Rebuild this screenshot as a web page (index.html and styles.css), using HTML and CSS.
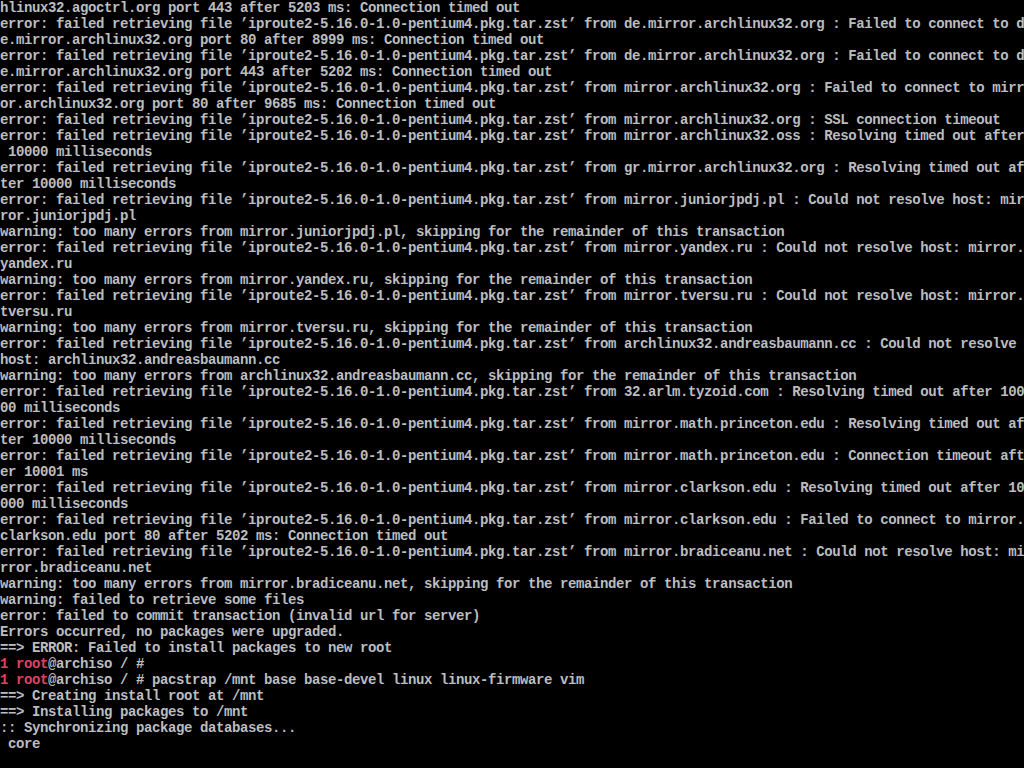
FILE: index.html
```html
<!DOCTYPE html>
<html>
<head>
<meta charset="utf-8">
<title>tty1</title>
<link rel="stylesheet" href="styles.css">
</head>
<body>
<pre class="console">hlinux32.agoctrl.org port 443 after 5203 ms: Connection timed out
error: failed retrieving file ’iproute2-5.16.0-1.0-pentium4.pkg.tar.zst’ from de.mirror.archlinux32.org : Failed to connect to d
e.mirror.archlinux32.org port 80 after 8999 ms: Connection timed out
error: failed retrieving file ’iproute2-5.16.0-1.0-pentium4.pkg.tar.zst’ from de.mirror.archlinux32.org : Failed to connect to d
e.mirror.archlinux32.org port 443 after 5202 ms: Connection timed out
error: failed retrieving file ’iproute2-5.16.0-1.0-pentium4.pkg.tar.zst’ from mirror.archlinux32.org : Failed to connect to mirr
or.archlinux32.org port 80 after 9685 ms: Connection timed out
error: failed retrieving file ’iproute2-5.16.0-1.0-pentium4.pkg.tar.zst’ from mirror.archlinux32.org : SSL connection timeout
error: failed retrieving file ’iproute2-5.16.0-1.0-pentium4.pkg.tar.zst’ from mirror.archlinux32.oss : Resolving timed out after
 10000 milliseconds
error: failed retrieving file ’iproute2-5.16.0-1.0-pentium4.pkg.tar.zst’ from gr.mirror.archlinux32.org : Resolving timed out af
ter 10000 milliseconds
error: failed retrieving file ’iproute2-5.16.0-1.0-pentium4.pkg.tar.zst’ from mirror.juniorjpdj.pl : Could not resolve host: mir
ror.juniorjpdj.pl
warning: too many errors from mirror.juniorjpdj.pl, skipping for the remainder of this transaction
error: failed retrieving file ’iproute2-5.16.0-1.0-pentium4.pkg.tar.zst’ from mirror.yandex.ru : Could not resolve host: mirror.
yandex.ru
warning: too many errors from mirror.yandex.ru, skipping for the remainder of this transaction
error: failed retrieving file ’iproute2-5.16.0-1.0-pentium4.pkg.tar.zst’ from mirror.tversu.ru : Could not resolve host: mirror.
tversu.ru
warning: too many errors from mirror.tversu.ru, skipping for the remainder of this transaction
error: failed retrieving file ’iproute2-5.16.0-1.0-pentium4.pkg.tar.zst’ from archlinux32.andreasbaumann.cc : Could not resolve
host: archlinux32.andreasbaumann.cc
warning: too many errors from archlinux32.andreasbaumann.cc, skipping for the remainder of this transaction
error: failed retrieving file ’iproute2-5.16.0-1.0-pentium4.pkg.tar.zst’ from 32.arlm.tyzoid.com : Resolving timed out after 100
00 milliseconds
error: failed retrieving file ’iproute2-5.16.0-1.0-pentium4.pkg.tar.zst’ from mirror.math.princeton.edu : Resolving timed out af
ter 10000 milliseconds
error: failed retrieving file ’iproute2-5.16.0-1.0-pentium4.pkg.tar.zst’ from mirror.math.princeton.edu : Connection timeout aft
er 10001 ms
error: failed retrieving file ’iproute2-5.16.0-1.0-pentium4.pkg.tar.zst’ from mirror.clarkson.edu : Resolving timed out after 10
000 milliseconds
error: failed retrieving file ’iproute2-5.16.0-1.0-pentium4.pkg.tar.zst’ from mirror.clarkson.edu : Failed to connect to mirror.
clarkson.edu port 80 after 5202 ms: Connection timed out
error: failed retrieving file ’iproute2-5.16.0-1.0-pentium4.pkg.tar.zst’ from mirror.bradiceanu.net : Could not resolve host: mi
rror.bradiceanu.net
warning: too many errors from mirror.bradiceanu.net, skipping for the remainder of this transaction
warning: failed to retrieve some files
error: failed to commit transaction (invalid url for server)
Errors occurred, no packages were upgraded.
==&gt; ERROR: Failed to install packages to new root
<span class="red">1 root</span>@archiso / #
<span class="red">1 root</span>@archiso / # pacstrap /mnt base base-devel linux linux-firmware vim
==&gt; Creating install root at /mnt
==&gt; Installing packages to /mnt
:: Synchronizing package databases...
 core</pre>
</body>
</html>
```

FILE: styles.css
```css
html, body {
  margin: 0;
  padding: 0;
  background: #000;
  width: 1024px;
  height: 768px;
  overflow: hidden;
}
.console {
  margin: 0;
  padding: 0;
  font-family: "Liberation Mono", "DejaVu Sans Mono", monospace;
  font-size: 14px;
  letter-spacing: -0.4px;
  line-height: 16px;
  color: #bdbdbd;
  font-weight: bold;
  white-space: pre;
}
.red {
  color: #e0405e;
}
```
